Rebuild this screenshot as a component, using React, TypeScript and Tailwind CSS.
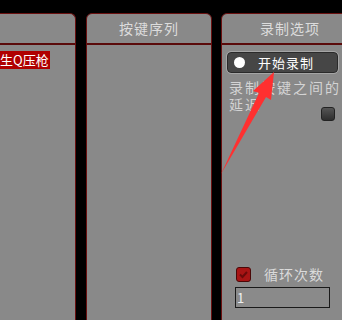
import React from 'react';

const font = { fontFamily: '"Noto Sans CJK SC", "Noto Sans", sans-serif' };

function Header({ title }: { title?: string }) {
    return (
        <div className="h-[31px] border-b-2 border-[#5a0a0a] flex items-center justify-center text-[14px] text-[#dcdcdc] tracking-[1px]">
            {title}
        </div>
    );
}

export default function App() {
    return (
        <div className="relative w-[342px] h-[320px] bg-black overflow-hidden flex pt-[13px]" style={font}>
            {/* left panel, cut off by the window */}
            <div className="w-[76px] h-[320px] shrink-0 bg-[#898989] border-t border-r border-[#6a1010] rounded-tr-[6px]">
                <Header />
                <div className="pt-px">
                    <div className="inline-flex items-center h-[18px] bg-[#b00000] text-white text-[13px] leading-none pr-[1px]">
                        生Q压枪
                    </div>
                </div>
            </div>

            {/* key sequence */}
            <div className="ml-[10px] w-[126px] h-[320px] shrink-0 bg-[#898989] border border-[#6a1010] rounded-t-[6px]">
                <Header title="按键序列" />
            </div>

            {/* record options */}
            <div className="ml-[9px] w-[138px] h-[320px] shrink-0 bg-[#898989] border border-[#6a1010] rounded-t-[6px]">
                <Header title="录制选项" />
                <div className="flex flex-col pl-[5px] pt-[7px]">
                    <button className="w-[111px] h-[21px] flex items-center rounded-[4px] bg-[#464646] border border-[#2a2a2a] outline outline-1 outline-[#a5a5a5] text-white text-[13px]">
                        <span className="ml-[6px] w-[11px] h-[11px] rounded-full bg-white" />
                        <span className="ml-[13px] tracking-[1px]">开始录制</span>
                    </button>
                    <div className="mt-[6px] pl-[2px] text-[14px] leading-[17px] tracking-[2px] text-[#d4d4d4] whitespace-nowrap">
                        录制按键之间的
                    </div>
                    <div className="flex items-start pl-[2px] text-[14px] leading-[17px] tracking-[2px] text-[#d4d4d4]">
                        <span>延迟</span>
                        <span className="ml-[60px] mt-[11px] w-[14px] h-[14px] rounded-[3px] border border-[#222] bg-gradient-to-b from-[#555] to-[#2e2e2e]" />
                    </div>
                    <div className="mt-[146px] ml-[9px] flex items-center h-[15px]">
                        <span className="w-[15px] h-[15px] rounded-[3px] border border-[#4a0808] bg-[#a81414] flex items-center justify-center">
                            <svg width="11" height="11" viewBox="0 0 11 11">
                                <path d="M2 5.5 L4.5 8 L9 3" stroke="#6a0a0a" strokeWidth="2" fill="none" />
                            </svg>
                        </span>
                        <span className="ml-[13px] text-[14px] tracking-[1px] text-[#dadada]">循环次数</span>
                    </div>
                    <div className="mt-[5px] ml-[8px] w-[95px] h-[21px] border border-[#1a1a1a] bg-[#8a8a8a] flex items-center pl-px text-[13px] text-[#f0f0f0]">
                        1
                    </div>
                </div>
            </div>

            {/* red annotation arrow */}
            <svg className="absolute inset-0 pointer-events-none" width="342" height="320" viewBox="0 0 342 320">
                <polygon
                    points="274,72 271,100 266,97 221,174 259,93 253,91"
                    fill="#ff3030"
                />
            </svg>
        </div>
    );
}
